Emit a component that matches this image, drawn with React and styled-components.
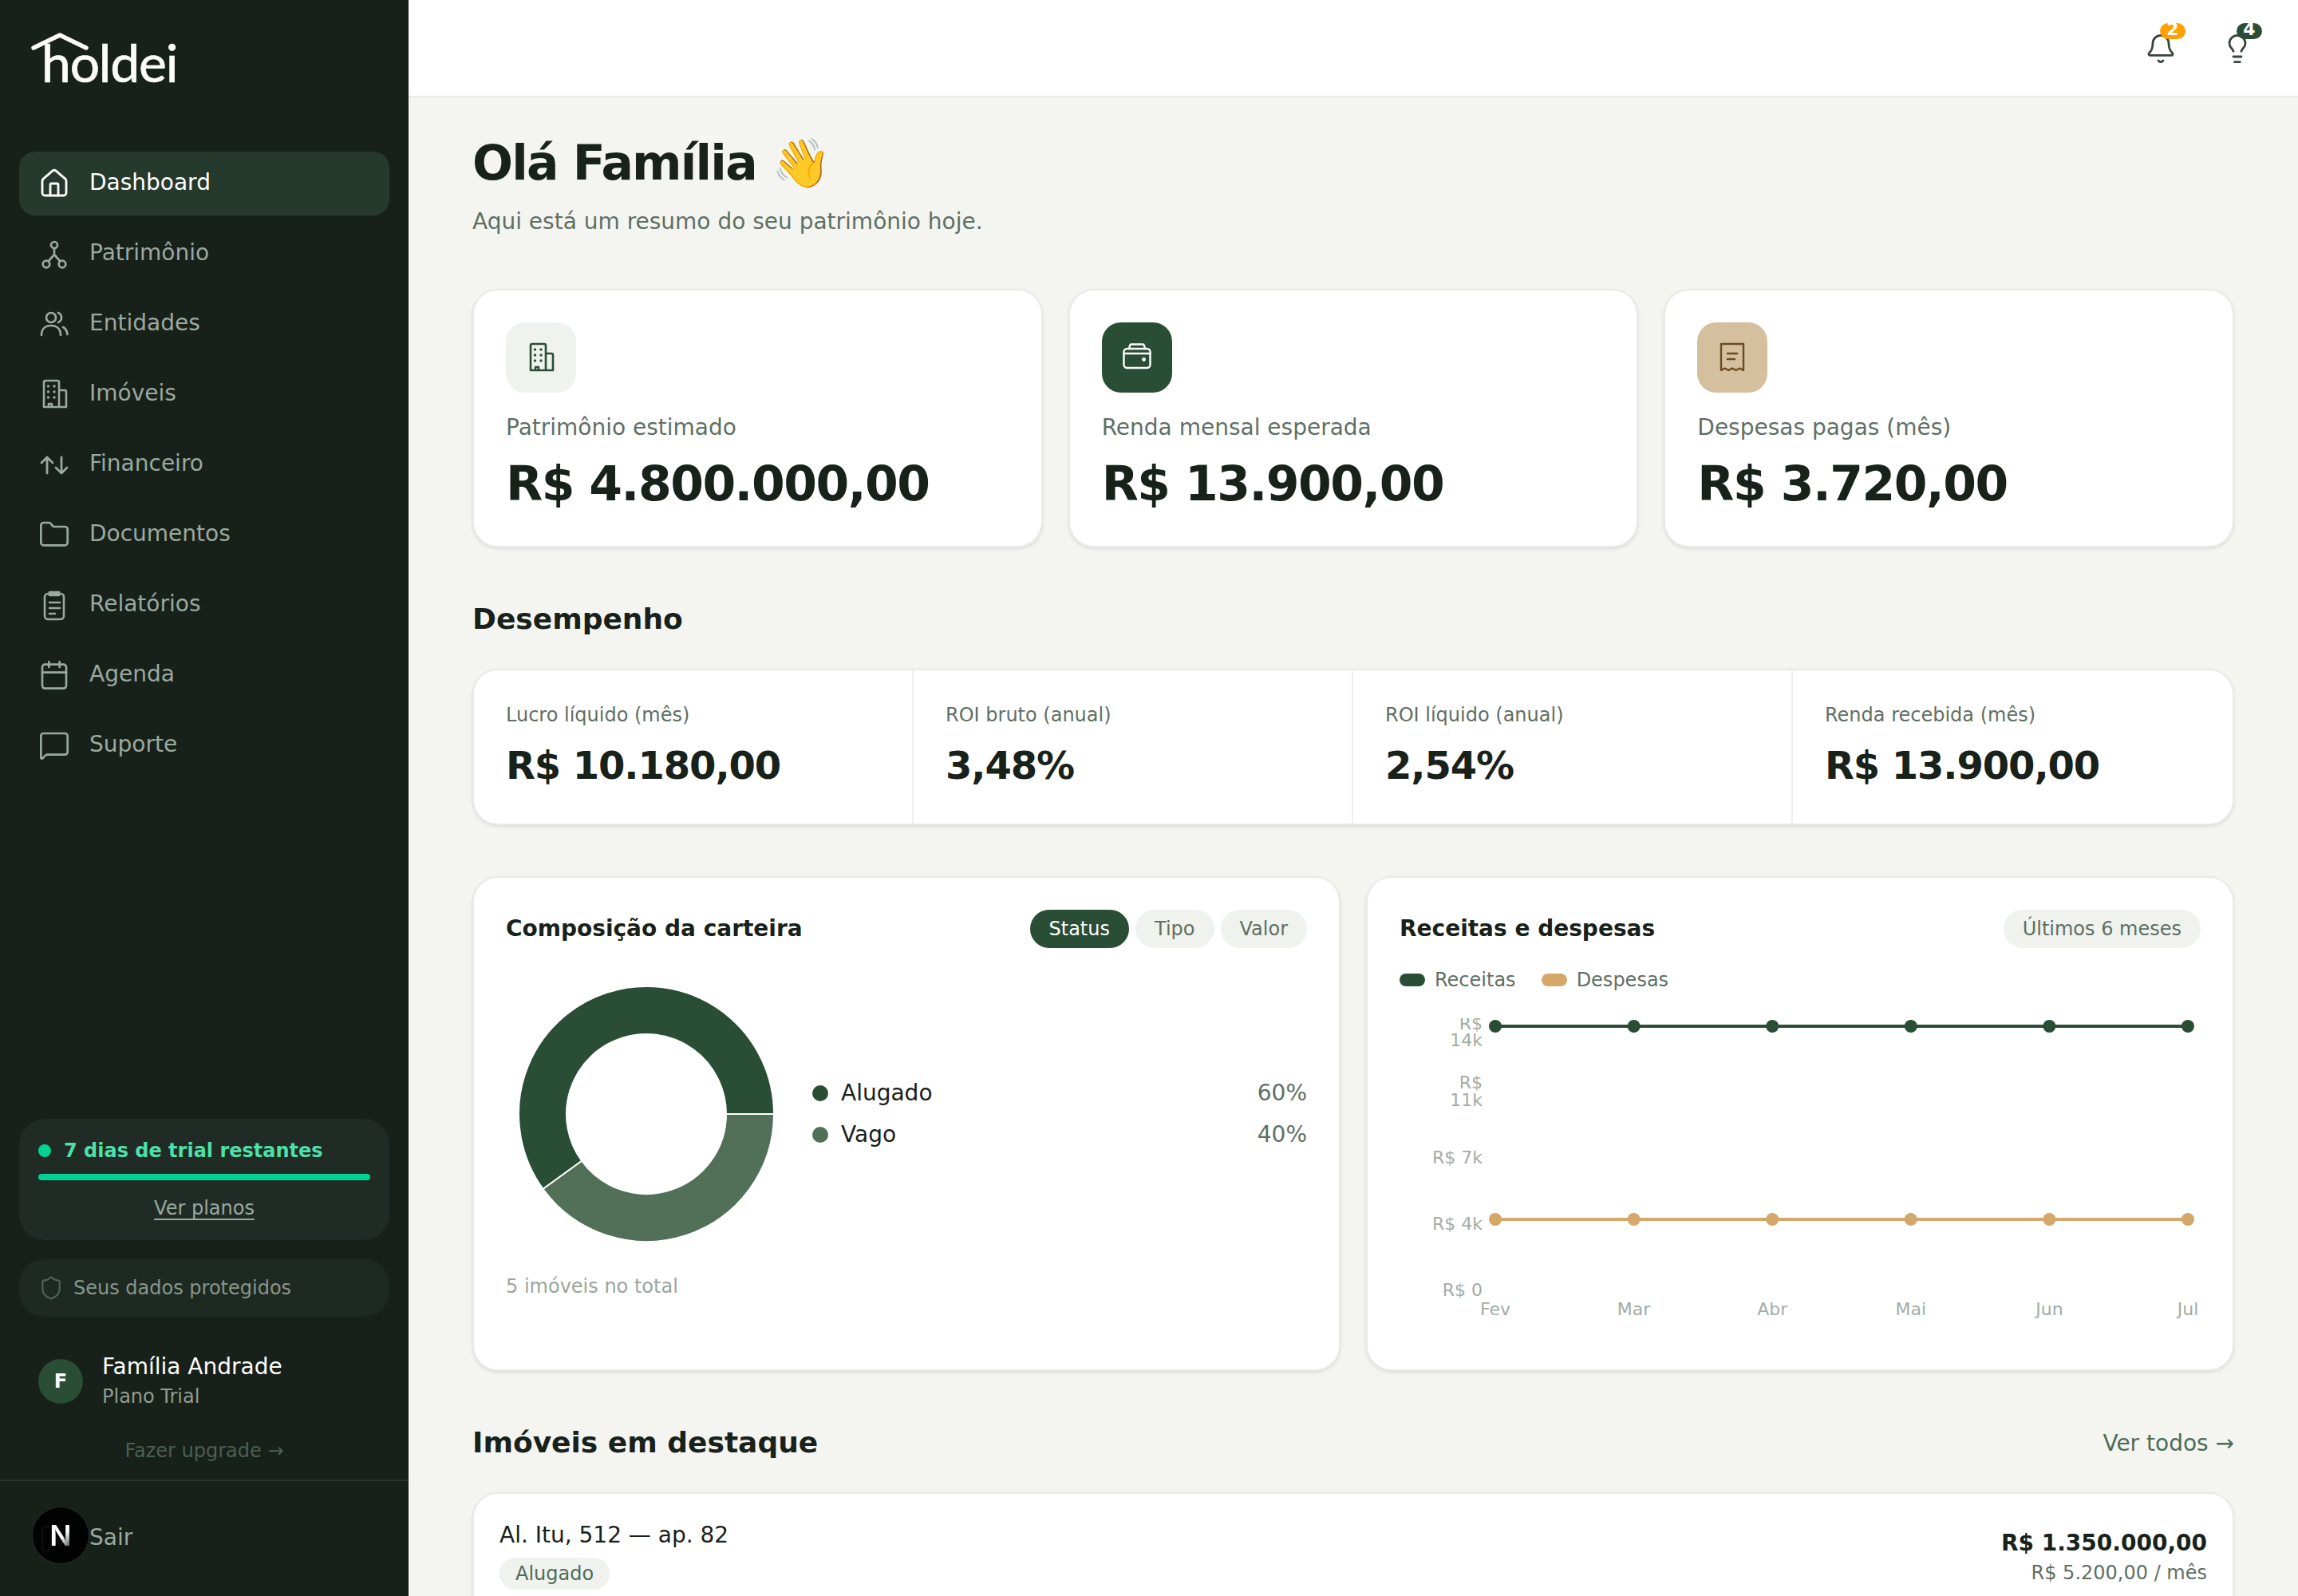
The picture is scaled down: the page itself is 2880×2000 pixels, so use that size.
import styled, { createGlobalStyle } from "styled-components";
import {
    House, Folder, Calendar, MessageSquare, Shield, Bell, Lightbulb, LogOut,
} from "lucide-react";

const GlobalStyle = createGlobalStyle`
    html, body {
        margin: 0;
        padding: 0;
        background: #f4f5f1;
        font-family: "DejaVu Sans", sans-serif;
        color: #18211a;
    }
    * { box-sizing: border-box; }
`;

const Shell = styled.div`
    display: flex;
    width: 2880px;
    height: 2000px;
    overflow: hidden;
`;

const Sidebar = styled.aside`
    position: relative;
    width: 512px;
    flex-shrink: 0;
    display: flex;
    flex-direction: column;
    background: #18201a;
`;

const LogoWrap = styled.div`
    position: relative;
    height: 190px;
    padding: 38px 0 0 52px;
    span {
        font-family: "Lato", sans-serif;
        font-size: 66px;
        line-height: 80px;
        letter-spacing: -1.2px;
        color: #fbfbf7;
        -webkit-text-stroke: 0.7px #fbfbf7;
    }
    svg {
        position: absolute;
        left: 38px;
        top: 38px;
    }
`;

const Nav = styled.nav`
    display: flex;
    flex-direction: column;
    gap: 8px;
    padding: 0 24px;
`;

const NavItem = styled.a`
    display: flex;
    align-items: center;
    gap: 24px;
    height: 80px;
    padding: 0 24px;
    border-radius: 20px;
    font-size: 28px;
    color: ${(p) => (p.$active ? "#ffffff" : "#9aa99f")};
    background: ${(p) => (p.$active ? "#25392c" : "transparent")};
    svg { width: 40px; height: 40px; flex-shrink: 0; }
    span { margin-bottom: 4px; }
`;

const SideBottom = styled.div`
    margin-top: auto;
    display: flex;
    flex-direction: column;
    padding: 0 24px;
`;

const TrialCard = styled.div`
    height: 152px;
    padding: 24px;
    border-radius: 32px;
    background: #1f2b24;
`;

const TrialTitle = styled.div`
    display: flex;
    align-items: center;
    gap: 16px;
    font-size: 24px;
    line-height: 32px;
    font-weight: 700;
    color: #4fdfa9;
    i {
        width: 16px;
        height: 16px;
        border-radius: 50%;
        background: #00d391;
    }
`;

const TrialBar = styled.div`
    height: 8px;
    margin: 13px 0 17px;
    border-radius: 4px;
    background: #00d391;
`;

const TrialLink = styled.a`
    display: block;
    text-align: center;
    font-size: 24px;
    line-height: 36px;
    color: #9aa99f;
    text-decoration: underline;
    text-underline-offset: 5px;
`;

const SafeNote = styled.div`
    display: flex;
    align-items: center;
    gap: 12px;
    height: 72px;
    margin-top: 24px;
    padding: 0 24px;
    border-radius: 32px;
    background: #1e2a21;
    font-size: 24px;
    color: #88968c;
    svg { width: 32px; height: 32px; color: #4f6457; }
`;

const UserRow = styled.div`
    display: flex;
    align-items: center;
    gap: 24px;
    margin-top: 44px;
    padding: 0 24px;
`;

const Avatar = styled.div`
    width: 56px;
    height: 56px;
    border-radius: 50%;
    display: flex;
    align-items: center;
    justify-content: center;
    background: #2a4d35;
    color: #fff;
    font-size: 24px;
    font-weight: 700;
`;

const UserName = styled.div`
    font-size: 28px;
    line-height: 38px;
    color: #fff;
`;

const UserPlan = styled.div`
    font-size: 24px;
    line-height: 36px;
    color: #8f9d93;
`;

const UpgradeLink = styled.a`
    display: block;
    margin: 30px 0 0;
    text-align: center;
    font-size: 24px;
    line-height: 40px;
    color: #4b5f52;
`;

const SideFooter = styled.div`
    height: 146px;
    margin-top: 16px;
    padding: 0 24px;
    border-top: 2px solid #25312a;
    display: flex;
    align-items: center;
`;

const DevBadge = styled.div`
    position: absolute;
    left: 41px;
    bottom: 41px;
    width: 70px;
    height: 70px;
    border-radius: 50%;
    display: flex;
    align-items: center;
    justify-content: center;
    background: rgba(0, 0, 0, 0.92);
    outline: 1px dotted #333;
    span {
        font-family: "Inter", sans-serif;
        font-size: 36px;
        font-weight: 600;
        color: transparent;
        background: linear-gradient(135deg, #fff 55%, rgba(255, 255, 255, 0.35) 85%);
        background-clip: text;
        -webkit-background-clip: text;
    }
`;

const Main = styled.main`
    flex: 1;
    min-width: 0;
    display: flex;
    flex-direction: column;
`;

const Topbar = styled.header`
    height: 122px;
    flex-shrink: 0;
    display: flex;
    justify-content: flex-end;
    align-items: center;
    gap: 56px;
    padding: 2px 56px 0 0;
    background: #fff;
    border-bottom: 2px solid #e9ebe6;
`;

const IconButton = styled.div`
    position: relative;
    width: 40px;
    height: 40px;
    svg { display: block; width: 40px; height: 40px; color: #3a453e; }
`;

const CountBadge = styled.span`
    position: absolute;
    left: 19px;
    top: -12px;
    width: 32px;
    height: 20px;
    border-radius: 10px;
    overflow: hidden;
    text-align: center;
    font-size: 22px;
    line-height: 15px;
    font-weight: 700;
    color: #fff;
    background: ${(p) => p.$bg};
`;

const Content = styled.div`
    flex: 1;
    padding: 44px 80px 0;
    overflow: hidden;
`;

const PageTitle = styled.h1`
    margin: 0;
    font-size: 60px;
    line-height: 76px;
    font-weight: 700;
    letter-spacing: -1.8px;
`;

const PageSub = styled.p`
    margin: 16px 0 0;
    font-size: 28px;
    line-height: 40px;
    color: #5f6f64;
`;

const StatGrid = styled.div`
    display: grid;
    grid-template-columns: repeat(3, 1fr);
    gap: 32px;
    margin-top: 64px;
`;

const Card = styled.section`
    background: #fff;
    border: 2px solid #e9ebe6;
    border-radius: 32px;
    box-shadow: 0 2px 4px rgba(0, 0, 0, 0.1);
`;

const StatCard = styled(Card)`
    height: 324px;
    padding: 40px;
`;

const IconTile = styled.div`
    width: 88px;
    height: 88px;
    border-radius: 24px;
    display: flex;
    align-items: center;
    justify-content: center;
    background: ${(p) => p.$bg};
    color: ${(p) => p.$fg};
    svg { width: 40px; height: 40px; }
`;

const StatLabel = styled.div`
    margin-top: 24px;
    font-size: 28px;
    line-height: 40px;
    color: #5f6f64;
`;

const StatValue = styled.div`
    margin-top: 14px;
    font-size: 60px;
    line-height: 72px;
    font-weight: 700;
    letter-spacing: -1.5px;
`;

const SectionTitle = styled.h2`
    margin: 0;
    font-size: 36px;
    line-height: 48px;
    font-weight: 700;
`;

const MetricCard = styled(Card)`
    margin-top: 38px;
    height: 196px;
    display: grid;
    grid-template-columns: repeat(4, 1fr);
`;

const Metric = styled.div`
    padding: 40px 40px 0;
    & + & {
        margin-left: -2px;
        border-left: 2px solid #eef0ec;
    }
    span {
        display: block;
        font-size: 24px;
        line-height: 32px;
        color: #5f6f64;
    }
    strong {
        display: block;
        margin-top: 16px;
        font-size: 48px;
        line-height: 62px;
        font-weight: 700;
        letter-spacing: -1.1px;
    }
`;

const PanelGrid = styled.div`
    display: grid;
    grid-template-columns: repeat(2, 1fr);
    gap: 32px;
    margin-top: 64px;
`;

const Panel = styled(Card)`
    height: 620px;
    padding: 40px;
`;

const PanelHead = styled.div`
    display: flex;
    align-items: center;
    justify-content: space-between;
    height: 48px;
    h3 {
        margin: 0 0 2px;
        font-size: 28px;
        font-weight: 700;
    }
`;

const Pills = styled.div`
    display: flex;
    gap: 8px;
`;

const Pill = styled.span`
    display: block;
    height: 48px;
    padding: 0 24px;
    border-radius: 24px;
    font-size: 24px;
    line-height: 48px;
    color: ${(p) => (p.$active ? "#fff" : "#5f6f64")};
    background: ${(p) => (p.$active ? "#2a4d35" : "#f0f2ee")};
`;

const DonutRow = styled.div`
    display: flex;
    align-items: center;
    gap: 32px;
    margin-top: 48px;
`;

const Legend = styled.ul`
    flex: 1;
    margin: 0;
    padding: 0;
    list-style: none;
    display: flex;
    flex-direction: column;
    gap: 16px;
`;

const LegendRow = styled.li`
    display: flex;
    align-items: center;
    font-size: 28px;
    line-height: 36px;
    i {
        width: 20px;
        height: 20px;
        margin-right: 16px;
        border-radius: 50%;
        background: ${(p) => p.$color};
    }
    b {
        margin-left: auto;
        font-weight: 400;
        color: #5f6f64;
    }
`;

const PanelNote = styled.div`
    margin-top: 36px;
    font-size: 24px;
    line-height: 40px;
    color: #9aa59d;
`;

const ChartLegend = styled.div`
    display: flex;
    gap: 32px;
    margin-top: 22px;
    font-size: 24px;
    line-height: 36px;
    color: #5f6f64;
`;

const ChartKey = styled.span`
    display: flex;
    align-items: center;
    gap: 12px;
    i {
        width: 32px;
        height: 16px;
        border-radius: 8px;
        background: ${(p) => p.$color};
    }
`;

const Chart = styled.svg`
    display: block;
    margin-top: 30px;
    overflow: hidden;
    text {
        font-family: "DejaVu Sans", sans-serif;
        font-size: 22px;
        fill: #a3aca5;
    }
`;

const SectionRow = styled.div`
    display: flex;
    align-items: center;
    justify-content: space-between;
    margin-top: 66px;
`;

const SeeAll = styled.a`
    font-size: 28px;
    color: #4f6b57;
`;

const PropertyCard = styled(Card)`
    display: flex;
    justify-content: space-between;
    height: 300px;
    margin-top: 38px;
    padding: 32px 32px;
`;

const PropertyName = styled.div`
    font-size: 28px;
    line-height: 40px;
`;

const StatusBadge = styled.span`
    display: inline-block;
    margin-top: 8px;
    height: 40px;
    padding: 0 20px;
    border-radius: 20px;
    font-size: 24px;
    line-height: 40px;
    color: #4f6b57;
    background: #f0f2ee;
`;

const PropertyPrice = styled.div`
    padding-top: 10px;
    text-align: right;
    strong {
        display: block;
        font-size: 28px;
        line-height: 40px;
    }
    span {
        display: block;
        font-size: 24px;
        line-height: 34px;
        color: #5f6f64;
    }
`;

const TreeIcon = () => (
    <svg viewBox="0 0 40 40" fill="none" stroke="currentColor" strokeWidth="2.7" strokeLinecap="round">
        <circle cx="20" cy="9" r="4" />
        <circle cx="10" cy="33" r="4.3" />
        <circle cx="30" cy="33" r="4.3" />
        <path d="M20 13v8M20 21l-7 8M20 21l7 8" />
    </svg>
);

const PeopleIcon = () => (
    <svg viewBox="0 0 40 40" fill="none" stroke="currentColor" strokeWidth="2.7" strokeLinecap="round">
        <circle cx="16" cy="12" r="6" />
        <path d="M4 34c0-8 5-12 12-12s12 4 12 12M25 6a6.5 6.5 0 0 1 0 12M31 24c3 1.5 5 5 5.5 9" />
    </svg>
);

const TransferIcon = () => (
    <svg viewBox="0 0 40 40" fill="none" stroke="currentColor" strokeWidth="2.8" strokeLinecap="round" strokeLinejoin="round">
        <path d="M11 31V11M4 18l7-7 7 7M29 11v20M22 24l7 7 7-7" />
    </svg>
);

const BuildingIcon = () => (
    <svg viewBox="0 0 40 40" fill="none" stroke="currentColor" strokeWidth="2.6" strokeLinecap="round" strokeLinejoin="round">
        <path d="M7 36V5a2 2 0 0 1 2-2h15a2 2 0 0 1 2 2v31zM26 15h7a2 2 0 0 1 2 2v19h-9M13 36v-4M13 32h4v4" />
        <path d="M12.5 10h.01M20 10h.01M12.5 17h.01M20 17h.01M12.5 24h.01M20 24h.01" strokeWidth="3.4" />
    </svg>
);

const ReportIcon = () => (
    <svg viewBox="0 0 40 40" fill="none" stroke="currentColor" strokeWidth="2.6" strokeLinecap="round" strokeLinejoin="round">
        <rect x="8" y="6" width="24" height="32" rx="4" />
        <path d="M14 4h12v4H14zM14 17h13M14 24h13M14 31h7" />
    </svg>
);

const WalletIcon = () => (
    <svg viewBox="0 0 40 40" fill="none" stroke="currentColor" strokeWidth="2.4" strokeLinecap="round" strokeLinejoin="round">
        <rect x="3.5" y="9" width="33" height="24" rx="4" />
        <path d="M3.5 15h33M10 9l1-4a2 2 0 0 1 2-1.5h14a2 2 0 0 1 2 1.5l1 4" />
        <circle cx="28.5" cy="22.5" r="2.4" fill="currentColor" stroke="none" />
    </svg>
);

const ReceiptIcon = () => (
    <svg viewBox="0 0 40 40" fill="none" stroke="currentColor" strokeWidth="2.4" strokeLinecap="round" strokeLinejoin="round">
        <path d="M6 3h28v33l-4.6-2.5-4.7 2.5-4.7-2.5-4.7 2.5-4.7-2.5L6 36z" />
        <path d="M14 15h12M14 22h9" />
    </svg>
);

const HoldeiRoof = () => (
    <svg width="80" height="30" viewBox="0 0 80 30" fill="none" stroke="#fbfbf7" strokeWidth="5.4" strokeLinecap="round" strokeLinejoin="round">
        <path d="M4 22L37 6l33 16" />
    </svg>
);

const navItems = [
    { label: "Dashboard", icon: <House strokeWidth={1.7} />, active: true },
    { label: "Patrimônio", icon: <TreeIcon /> },
    { label: "Entidades", icon: <PeopleIcon /> },
    { label: "Imóveis", icon: <BuildingIcon /> },
    { label: "Financeiro", icon: <TransferIcon /> },
    { label: "Documentos", icon: <Folder strokeWidth={1.6} /> },
    { label: "Relatórios", icon: <ReportIcon /> },
    { label: "Agenda", icon: <Calendar strokeWidth={1.6} /> },
    { label: "Suporte", icon: <MessageSquare strokeWidth={1.6} /> },
];

const stats = [
    { label: "Patrimônio estimado", value: "R$ 4.800.000,00", icon: <BuildingIcon />, bg: "#f0f2ee", fg: "#2a4d35" },
    { label: "Renda mensal esperada", value: "R$ 13.900,00", icon: <WalletIcon />, bg: "#2a4d35", fg: "#ffffff" },
    { label: "Despesas pagas (mês)", value: "R$ 3.720,00", icon: <ReceiptIcon />, bg: "#d4bf9f", fg: "#6b4a20" },
];

const metrics = [
    { label: "Lucro líquido (mês)", value: "R$ 10.180,00" },
    { label: "ROI bruto (anual)", value: "3,48%" },
    { label: "ROI líquido (anual)", value: "2,54%" },
    { label: "Renda recebida (mês)", value: "R$ 13.900,00" },
];

const months = ["Fev", "Mar", "Abr", "Mai", "Jun", "Jul"];
const monthX = months.map((_, i) => 120 + i * 173.6);

// fatias do donut em angulos de tela, comeca em 0 e anda no sentido anti-horario
const slicePath = (from, to) => {
    const cx = 176, cy = 160, R = 160, r = 100;
    const pt = (rad, a) => {
        const t = (a * Math.PI) / 180;
        return `${cx + rad * Math.cos(t)} ${cy - rad * Math.sin(t)}`;
    };
    const large = to - from > 180 ? 1 : 0;
    return `M${pt(R, from)} A${R} ${R} 0 ${large} 0 ${pt(R, to)} L${pt(r, to)} A${r} ${r} 0 ${large} 1 ${pt(r, from)} Z`;
};

const App = () => (
    <Shell>
        <GlobalStyle />
        <Sidebar>
            <LogoWrap>
                <span>holdei</span>
                <HoldeiRoof />
            </LogoWrap>
            <Nav>
                {navItems.map((item) => (
                    <NavItem key={item.label} $active={item.active}>
                        {item.icon}
                        <span>{item.label}</span>
                    </NavItem>
                ))}
            </Nav>
            <SideBottom>
                <TrialCard>
                    <TrialTitle><i />7 dias de trial restantes</TrialTitle>
                    <TrialBar />
                    <TrialLink>Ver planos</TrialLink>
                </TrialCard>
                <SafeNote>
                    <Shield strokeWidth={1.6} />
                    Seus dados protegidos
                </SafeNote>
                <UserRow>
                    <Avatar>F</Avatar>
                    <div>
                        <UserName>Família Andrade</UserName>
                        <UserPlan>Plano Trial</UserPlan>
                    </div>
                </UserRow>
                <UpgradeLink>Fazer upgrade →</UpgradeLink>
            </SideBottom>
            <SideFooter>
                <NavItem><LogOut strokeWidth={1.6} /><span>Sair</span></NavItem>
            </SideFooter>
            <DevBadge><span>N</span></DevBadge>
        </Sidebar>
        <Main>
            <Topbar>
                <IconButton>
                    <Bell strokeWidth={1.7} />
                    <CountBadge $bg="#ff9f00">2</CountBadge>
                </IconButton>
                <IconButton>
                    <Lightbulb strokeWidth={1.7} />
                    <CountBadge $bg="#2a4d35">4</CountBadge>
                </IconButton>
            </Topbar>
            <Content>
                <PageTitle>Olá Família 👋</PageTitle>
                <PageSub>Aqui está um resumo do seu patrimônio hoje.</PageSub>
                <StatGrid>
                    {stats.map((s) => (
                        <StatCard key={s.label}>
                            <IconTile $bg={s.bg} $fg={s.fg}>{s.icon}</IconTile>
                            <StatLabel>{s.label}</StatLabel>
                            <StatValue>{s.value}</StatValue>
                        </StatCard>
                    ))}
                </StatGrid>
                <SectionRow><SectionTitle>Desempenho</SectionTitle></SectionRow>
                <MetricCard>
                    {metrics.map((m) => (
                        <Metric key={m.label}>
                            <span>{m.label}</span>
                            <strong>{m.value}</strong>
                        </Metric>
                    ))}
                </MetricCard>
                <PanelGrid>
                    <Panel>
                        <PanelHead>
                            <h3>Composição da carteira</h3>
                            <Pills>
                                <Pill $active>Status</Pill>
                                <Pill>Tipo</Pill>
                                <Pill>Valor</Pill>
                            </Pills>
                        </PanelHead>
                        <DonutRow>
                            <svg width="352" height="320" viewBox="0 0 352 320">
                                <path d={slicePath(0, 216)} fill="#2a4d35" stroke="#fff" strokeWidth="2" />
                                <path d={slicePath(216, 360)} fill="#527057" stroke="#fff" strokeWidth="2" />
                            </svg>
                            <Legend>
                                <LegendRow $color="#2a4d35"><i />Alugado<b>60%</b></LegendRow>
                                <LegendRow $color="#527057"><i />Vago<b>40%</b></LegendRow>
                            </Legend>
                        </DonutRow>
                        <PanelNote>5 imóveis no total</PanelNote>
                    </Panel>
                    <Panel>
                        <PanelHead>
                            <h3>Receitas e despesas</h3>
                            <Pill>Últimos 6 meses</Pill>
                        </PanelHead>
                        <ChartLegend>
                            <ChartKey $color="#2a4d35"><i />Receitas</ChartKey>
                            <ChartKey $color="#d4a86a"><i />Despesas</ChartKey>
                        </ChartLegend>
                        <Chart width="1004" height="380" viewBox="0 0 1004 380">
                            <g textAnchor="end">
                                <text x="104" y="14">R$</text>
                                <text x="104" y="35">14k</text>
                                <text x="104" y="88">R$</text>
                                <text x="104" y="110">11k</text>
                                <text x="104" y="182">R$ 7k</text>
                                <text x="104" y="265">R$ 4k</text>
                                <text x="104" y="348">R$ 0</text>
                            </g>
                            <line x1="120" y1="10" x2="988" y2="10" stroke="#2a4d35" strokeWidth="4" />
                            <line x1="120" y1="252" x2="988" y2="252" stroke="#d4a86a" strokeWidth="4" />
                            {monthX.map((x, i) => (
                                <g key={months[i]}>
                                    <circle cx={x} cy="10" r="8" fill="#2a4d35" />
                                    <circle cx={x} cy="252" r="8" fill="#d4a86a" />
                                    <text x={x} y="372" textAnchor="middle">{months[i]}</text>
                                </g>
                            ))}
                        </Chart>
                    </Panel>
                </PanelGrid>
                <SectionRow>
                    <SectionTitle>Imóveis em destaque</SectionTitle>
                    <SeeAll>Ver todos →</SeeAll>
                </SectionRow>
                <PropertyCard>
                    <div>
                        <PropertyName>Al. Itu, 512 — ap. 82</PropertyName>
                        <StatusBadge>Alugado</StatusBadge>
                    </div>
                    <PropertyPrice>
                        <strong>R$ 1.350.000,00</strong>
                        <span>R$ 5.200,00 / mês</span>
                    </PropertyPrice>
                </PropertyCard>
            </Content>
        </Main>
    </Shell>
);

export default App;
